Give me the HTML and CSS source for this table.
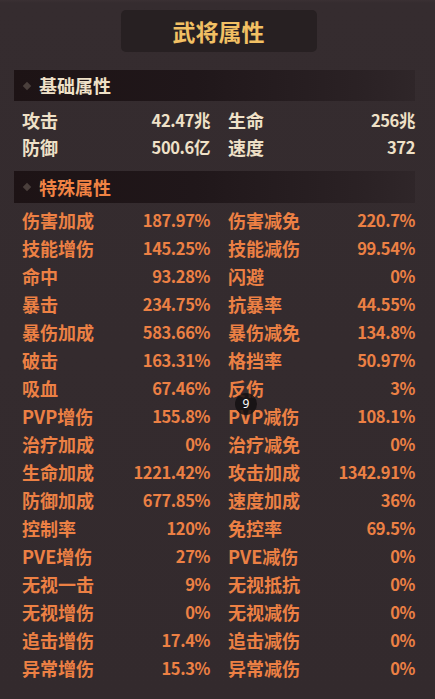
FILE: index.html
```html
<!DOCTYPE html>
<html lang="zh">
<head>
<meta charset="utf-8">
<link rel="stylesheet" href="styles.css">
</head>
<body>
<div class="panel">
  <div class="title-wrap"><div class="title">武将属性</div></div>

  <div class="section-head"><span class="dot"></span><span class="head-text base">基础属性</span></div>
  <div class="grid base-grid">
    <div class="cell"><span>攻击</span><span class="val">42.47兆</span></div>
    <div class="cell"><span>生命</span><span class="val">256兆</span></div>
    <div class="cell"><span>防御</span><span class="val">500.6亿</span></div>
    <div class="cell"><span>速度</span><span class="val">372</span></div>
  </div>

  <div class="section-head second"><span class="dot"></span><span class="head-text special">特殊属性</span></div>
  <div class="grid special-grid">
    <div class="cell"><span>伤害加成</span><span class="val">187.97%</span></div>
    <div class="cell"><span>伤害减免</span><span class="val">220.7%</span></div>
    <div class="cell"><span>技能增伤</span><span class="val">145.25%</span></div>
    <div class="cell"><span>技能减伤</span><span class="val">99.54%</span></div>
    <div class="cell"><span>命中</span><span class="val">93.28%</span></div>
    <div class="cell"><span>闪避</span><span class="val">0%</span></div>
    <div class="cell"><span>暴击</span><span class="val">234.75%</span></div>
    <div class="cell"><span>抗暴率</span><span class="val">44.55%</span></div>
    <div class="cell"><span>暴伤加成</span><span class="val">583.66%</span></div>
    <div class="cell"><span>暴伤减免</span><span class="val">134.8%</span></div>
    <div class="cell"><span>破击</span><span class="val">163.31%</span></div>
    <div class="cell"><span>格挡率</span><span class="val">50.97%</span></div>
    <div class="cell"><span>吸血</span><span class="val">67.46%</span></div>
    <div class="cell"><span>反伤</span><span class="val">3%</span></div>
    <div class="cell"><span>PVP增伤</span><span class="val">155.8%</span></div>
    <div class="cell"><span>PVP减伤</span><span class="val">108.1%</span></div>
    <div class="cell"><span>治疗加成</span><span class="val">0%</span></div>
    <div class="cell"><span>治疗减免</span><span class="val">0%</span></div>
    <div class="cell"><span>生命加成</span><span class="val">1221.42%</span></div>
    <div class="cell"><span>攻击加成</span><span class="val">1342.91%</span></div>
    <div class="cell"><span>防御加成</span><span class="val">677.85%</span></div>
    <div class="cell"><span>速度加成</span><span class="val">36%</span></div>
    <div class="cell"><span>控制率</span><span class="val">120%</span></div>
    <div class="cell"><span>免控率</span><span class="val">69.5%</span></div>
    <div class="cell"><span>PVE增伤</span><span class="val">27%</span></div>
    <div class="cell"><span>PVE减伤</span><span class="val">0%</span></div>
    <div class="cell"><span>无视一击</span><span class="val">9%</span></div>
    <div class="cell"><span>无视抵抗</span><span class="val">0%</span></div>
    <div class="cell"><span>无视增伤</span><span class="val">0%</span></div>
    <div class="cell"><span>无视减伤</span><span class="val">0%</span></div>
    <div class="cell"><span>追击增伤</span><span class="val">17.4%</span></div>
    <div class="cell"><span>追击减伤</span><span class="val">0%</span></div>
    <div class="cell"><span>异常增伤</span><span class="val">15.3%</span></div>
    <div class="cell"><span>异常减伤</span><span class="val">0%</span></div>
  </div>
  <div class="badge">9</div>
</div>
</body>
</html>
```

FILE: styles.css
```css
html, body {
  margin: 0;
  padding: 0;
  background: #342b2e;
}
body {
  width: 435px;
  height: 699px;
  overflow: hidden;
  font-family: "Noto Sans CJK SC", "Noto Sans", sans-serif;
  font-weight: 700;
}
.panel {
  position: relative;
  height: 699px;
  padding-top: 10px;
  box-sizing: border-box;
  background: linear-gradient(180deg, #3a3033 0, #352c2f 3px, #332a2d 100%);
}
.title-wrap {
  display: flex;
  justify-content: center;
  padding-left: 2px;
}
.title {
  width: 196px;
  height: 42px;
  background: #272022;
  border-radius: 5px;
  color: #f2c064;
  font-size: 23px;
  line-height: 42px;
  text-align: center;
}
.section-head {
  margin: 18px 20px 0 14px;
  height: 31px;
  display: flex;
  align-items: center;
  background: linear-gradient(90deg, #1d1315 0%, #20171a 45%, #2a2124 85%, #2f2629 100%);
}
.section-head.second {
  margin-top: 11px;
  height: 32px;
}
.dot {
  width: 6px;
  height: 6px;
  background: #4a3f3c;
  transform: rotate(45deg);
  margin-left: 10px;
  margin-right: 9px;
}
.head-text {
  font-size: 18px;
  line-height: 31px;
}
.head-text.base { color: #efe1c8; }
.head-text.special { color: #f08344; }
.grid {
  display: grid;
  grid-template-columns: 188px 187px;
  column-gap: 18px;
  padding-left: 22px;
}
.base-grid {
  padding-top: 5px;
  grid-auto-rows: 27px;
  color: #efe1c8;
}
.special-grid {
  padding-top: 3px;
  grid-auto-rows: 28px;
  color: #ec8044;
}
.cell {
  display: flex;
  justify-content: space-between;
  align-items: center;
  font-size: 18px;
  line-height: 28px;
  white-space: nowrap;
}
.val {
  font-size: 16.5px;
  letter-spacing: -0.4px;
}
.badge {
  position: absolute;
  left: 235px;
  top: 393px;
  width: 22px;
  height: 22px;
  border-radius: 50%;
  background: rgba(20, 16, 18, 0.85);
  color: #ffffff;
  font-family: "Noto Sans", sans-serif;
  font-size: 12px;
  font-weight: 400;
  line-height: 21px;
  text-align: center;
}
```
